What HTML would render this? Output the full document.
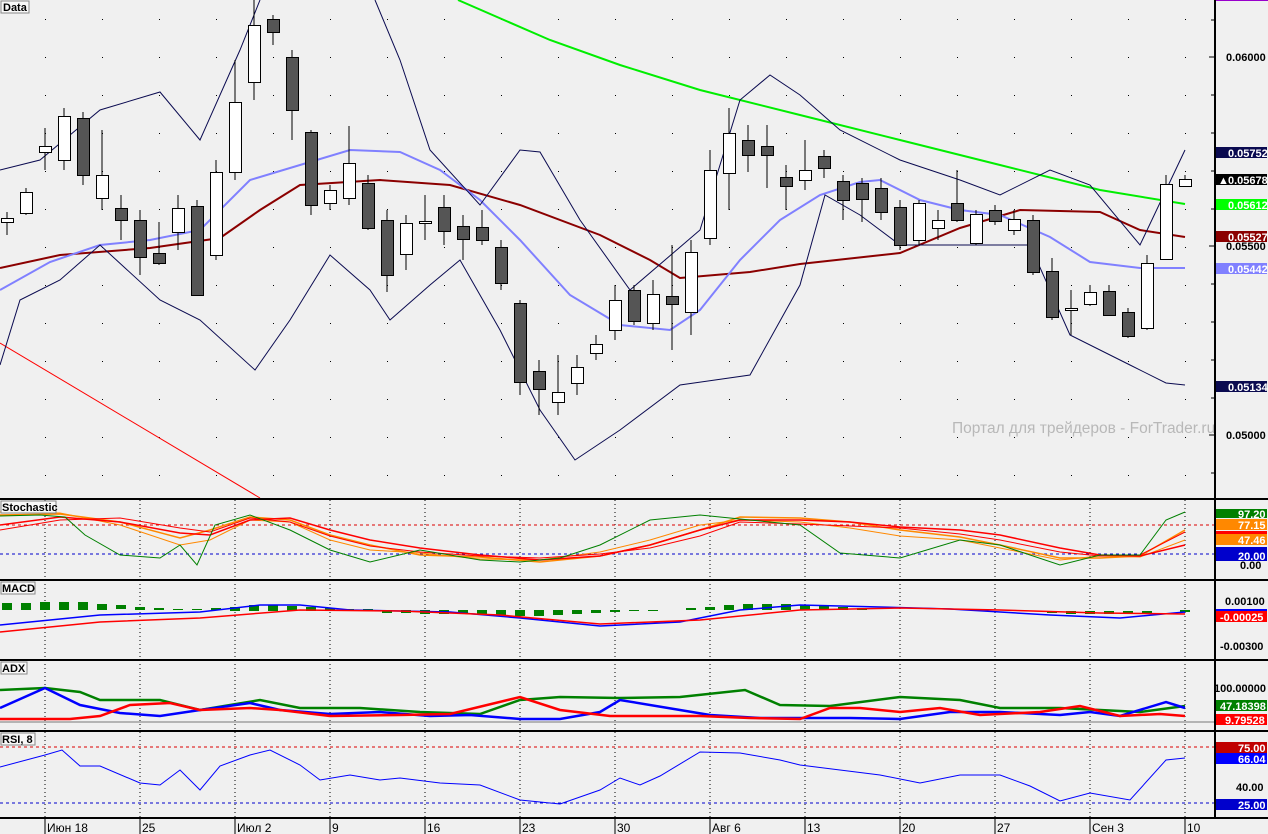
<!DOCTYPE html>
<html><head><meta charset="utf-8"><style>
html,body{margin:0;padding:0;background:#f0f0f0;}
svg{display:block;font-family:"Liberation Sans","DejaVu Sans",sans-serif;}
.t{font-weight:bold;font-size:11px;}
.ax{font-size:11px;font-weight:bold;fill:#000;}
.lb{font-size:11px;font-weight:bold;fill:#fff;}
.d{font-size:12px;fill:#000;}
</style></head><body>
<svg width="1268" height="834" viewBox="0 0 1268 834" xmlns="http://www.w3.org/2000/svg">
<rect width="1268" height="834" fill="#f0f0f0"/>
<defs>
<pattern id="dots" x="0" y="0" width="57" height="38" patternUnits="userSpaceOnUse"><rect x="45" y="19" width="1" height="1" fill="#000"/></pattern>
</defs>
<rect x="0" y="0" width="1214" height="498" fill="url(#dots)"/>
<g stroke="#000" stroke-width="1" stroke-dasharray="1,3">
<path d="M45 500V818M140 500V818M235 500V818M330 500V818M425 500V818M520 500V818M615 500V818M710 500V818M805 500V818M900 500V818M995 500V818M1090 500V818M1185 500V818"/>
</g>
<text x="952" y="433" font-size="15.5" fill="#b8b8b8">Портал для трейдеров - ForTrader.ru</text>
<line x1="0" y1="343" x2="260" y2="498" stroke="#ff0000" stroke-width="1"/>
<polyline fill="none" stroke="#00ee00" stroke-width="2" points="458,0 550,40 620,65 700,90 800,115 900,140 1000,165 1100,190 1185,204"/>
<polyline fill="none" stroke="#8b0000" stroke-width="2" points="0,268 60,255 150,248 220,238 260,210 300,185 380,180 450,185 520,205 600,235 650,260 680,278 750,272 800,264 900,253 960,228 1020,210 1100,212 1140,230 1185,237"/>
<polyline fill="none" stroke="#8080ff" stroke-width="2" points="0,290 50,262 100,245 150,240 200,230 250,180 300,165 350,150 400,152 440,170 480,200 520,240 570,295 620,325 670,330 700,310 740,260 780,220 820,195 860,182 880,180 920,200 960,210 1000,215 1050,237 1090,262 1140,268 1185,268"/>
<polyline fill="none" stroke="#0a0a50" stroke-width="1" points="0,170 40,160 100,110 160,92 200,140 240,50 260,0"/>
<polyline fill="none" stroke="#0a0a50" stroke-width="1" points="375,0 400,60 430,150 480,205 520,150 540,152 580,220 630,290 700,230 740,100 770,75 800,95 840,130 900,160 960,180 1000,195 1050,170 1090,185 1140,245 1185,150"/>
<polyline fill="none" stroke="#0a0a50" stroke-width="1" points="0,365 20,300 60,280 100,245 160,300 200,320 255,370 290,320 330,255 370,290 390,320 430,285 460,260 500,330 540,410 575,460 620,430 680,385 750,375 800,285 825,195 860,215 900,245 1030,245 1070,335 1130,365 1166,383 1185,385"/>
<g stroke="#000" stroke-width="1">
<path d="M7 212V235M26 188V215M45 128V170M64 108V170M83 112V185M102 130V210M121 195V240M140 210V275M159 222V265M178 195V250M197 200V296M216 160V260M235 60V180M254 0V100M273 15V45M292 50V140M311 130V215M330 185V210M349 126V205M368 175V230M387 210V292M406 215V270M425 195V240M444 195V245M463 215V260M482 210V245M501 240V290M520 300V395M539 360V415M558 355V415M577 355V395M596 335V360M615 285V340M634 285V325M653 280V330M672 245V350M691 240V335M710 150V245M729 108V210M748 125V172M767 125V188M786 165V210M805 140V190M824 150V178M843 175V220M862 178V222M881 178V220M900 200V250M919 200V245M938 210V240M957 170V222M976 210V245M995 205V225M1014 210V235M1033 215V275M1052 258V320M1071 290V335M1090 285V306M1109 285V316M1128 308V338M1147 255V330M1166 175V260M1185 175V186"/>
</g>
<g stroke="#000" stroke-width="1" fill="#fff">
<rect x="1.5" y="218.5" width="12" height="4"/><rect x="20.5" y="192.5" width="12" height="21"/><rect x="39.5" y="146.5" width="12" height="6"/><rect x="58.5" y="116.5" width="12" height="44"/><rect x="96.5" y="175.5" width="12" height="23"/><rect x="172.5" y="208.5" width="12" height="24"/><rect x="210.5" y="172.5" width="12" height="83"/><rect x="229.5" y="102.5" width="12" height="70"/><rect x="248.5" y="25.5" width="12" height="57"/><rect x="324.5" y="190.5" width="12" height="13"/><rect x="343.5" y="163.5" width="12" height="35"/><rect x="400.5" y="223.5" width="12" height="31"/><rect x="419.5" y="221.5" width="12" height="2"/><rect x="552.5" y="392.5" width="12" height="10"/><rect x="571.5" y="367.5" width="12" height="16"/><rect x="590.5" y="344.5" width="12" height="9"/><rect x="609.5" y="300.5" width="12" height="30"/><rect x="647.5" y="294.5" width="12" height="29"/><rect x="685.5" y="252.5" width="12" height="60"/><rect x="704.5" y="170.5" width="12" height="68"/><rect x="723.5" y="133.5" width="12" height="40"/><rect x="799.5" y="170.5" width="12" height="10"/><rect x="913.5" y="203.5" width="12" height="37"/><rect x="932.5" y="220.5" width="12" height="8"/><rect x="970.5" y="214.5" width="12" height="29"/><rect x="1008.5" y="219.5" width="12" height="11"/><rect x="1065.5" y="308.5" width="12" height="2"/><rect x="1084.5" y="292.5" width="12" height="12"/><rect x="1141.5" y="263.5" width="12" height="65"/><rect x="1160.5" y="184.5" width="12" height="75"/><rect x="1179.5" y="179.5" width="12" height="7"/>
</g>
<g stroke="#000" stroke-width="1" fill="#555">
<rect x="77.5" y="118.5" width="12" height="57"/><rect x="115.5" y="208.5" width="12" height="12"/><rect x="134.5" y="220.5" width="12" height="37"/><rect x="153.5" y="253.5" width="12" height="10"/><rect x="191.5" y="206.5" width="12" height="89"/><rect x="267.5" y="19.5" width="12" height="13"/><rect x="286.5" y="57.5" width="12" height="53"/><rect x="305.5" y="132.5" width="12" height="73"/><rect x="362.5" y="183.5" width="12" height="45"/><rect x="381.5" y="220.5" width="12" height="55"/><rect x="438.5" y="207.5" width="12" height="24"/><rect x="457.5" y="226.5" width="12" height="13"/><rect x="476.5" y="227.5" width="12" height="13"/><rect x="495.5" y="247.5" width="12" height="36"/><rect x="514.5" y="303.5" width="12" height="79"/><rect x="533.5" y="371.5" width="12" height="18"/><rect x="628.5" y="290.5" width="12" height="31"/><rect x="666.5" y="296.5" width="12" height="8"/><rect x="742.5" y="140.5" width="12" height="15"/><rect x="761.5" y="146.5" width="12" height="9"/><rect x="780.5" y="177.5" width="12" height="9"/><rect x="818.5" y="156.5" width="12" height="12"/><rect x="837.5" y="181.5" width="12" height="19"/><rect x="856.5" y="183.5" width="12" height="16"/><rect x="875.5" y="188.5" width="12" height="24"/><rect x="894.5" y="207.5" width="12" height="38"/><rect x="951.5" y="203.5" width="12" height="17"/><rect x="989.5" y="210.5" width="12" height="11"/><rect x="1027.5" y="220.5" width="12" height="52"/><rect x="1046.5" y="271.5" width="12" height="46"/><rect x="1103.5" y="291.5" width="12" height="24"/><rect x="1122.5" y="312.5" width="12" height="24"/>
</g>
<g fill="none" stroke-dasharray="3,3"><line x1="0" y1="525" x2="1214" y2="525" stroke="#d00"/><line x1="0" y1="554" x2="1214" y2="554" stroke="#00c"/></g>
<polyline fill="none" stroke="#ff8800" stroke-width="1.5" points="0,515 60,514 120,522 180,538 210,530 250,517 290,520 330,535 370,545 420,555 480,557 540,562 600,556 650,545 700,530 740,517 800,518 850,522 900,530 960,537 1000,545 1060,558 1100,558 1140,556 1185,530"/>
<polyline fill="none" stroke="#ff8800" stroke-width="1" points="0,512 60,513 120,525 180,545 210,540 250,520 290,522 330,540 370,550 420,553 480,559 540,560 600,552 650,540 700,525 740,520 800,522 850,528 900,536 960,540 1000,548 1060,560 1100,556 1140,557 1185,540"/>
<polyline fill="none" stroke="#ff0000" stroke-width="1.5" points="0,525 60,517 120,522 180,533 210,535 250,520 290,518 330,530 370,540 420,548 480,555 540,560 600,556 650,545 700,530 740,520 800,520 850,522 900,527 960,530 1000,535 1060,548 1100,555 1140,556 1185,545"/>
<polyline fill="none" stroke="#ff0000" stroke-width="1" points="0,530 60,520 120,518 180,528 210,532 250,518 290,522 330,536 370,546 420,552 480,556 540,558 600,554 650,548 700,536 740,522 800,524 850,526 900,528 960,534 1000,540 1060,552 1100,556 1140,555 1185,532"/>
<polyline fill="none" stroke="#008000" stroke-width="1" points="0,516 40,515 65,517 85,535 120,555 160,558 180,545 197,565 215,525 250,515 290,530 330,550 370,562 420,550 480,560 520,562 560,558 600,545 650,520 700,515 750,520 800,525 840,553 900,558 960,540 1000,545 1060,565 1100,555 1140,555 1166,520 1185,512"/>
<g fill="#008000">
<rect x="2" y="603" width="10" height="7"/><rect x="21" y="603" width="10" height="7"/><rect x="40" y="602" width="10" height="8"/><rect x="59" y="602" width="10" height="8"/><rect x="78" y="602" width="10" height="8"/><rect x="97" y="604" width="10" height="6"/><rect x="116" y="605" width="10" height="4"/><rect x="135" y="607" width="10" height="3"/><rect x="154" y="608" width="10" height="2"/><rect x="173" y="609" width="10" height="1"/><rect x="192" y="609" width="10" height="1"/><rect x="211" y="608" width="10" height="2"/><rect x="230" y="607" width="10" height="4"/><rect x="249" y="605" width="10" height="6"/><rect x="268" y="605" width="10" height="6"/><rect x="287" y="606" width="10" height="5"/><rect x="306" y="607" width="10" height="4"/><rect x="325" y="608" width="10" height="3"/><rect x="344" y="609" width="10" height="2"/><rect x="363" y="609" width="10" height="2"/><rect x="382" y="610" width="10" height="3"/><rect x="401" y="610" width="10" height="3"/><rect x="420" y="610" width="10" height="4"/><rect x="439" y="610" width="10" height="4"/><rect x="458" y="610" width="10" height="4"/><rect x="477" y="610" width="10" height="4"/><rect x="496" y="610" width="10" height="5"/><rect x="515" y="610" width="10" height="6"/><rect x="534" y="610" width="10" height="6"/><rect x="553" y="610" width="10" height="5"/><rect x="572" y="610" width="10" height="4"/><rect x="591" y="610" width="10" height="3"/><rect x="610" y="610" width="10" height="2"/><rect x="629" y="610" width="10" height="1"/><rect x="648" y="610" width="10" height="1"/><rect x="686" y="608" width="10" height="2"/><rect x="705" y="607" width="10" height="3"/><rect x="724" y="605" width="10" height="5"/><rect x="743" y="604" width="10" height="6"/><rect x="762" y="604" width="10" height="6"/><rect x="781" y="604" width="10" height="6"/><rect x="800" y="605" width="10" height="5"/><rect x="819" y="606" width="10" height="4"/><rect x="838" y="607" width="10" height="3"/><rect x="857" y="608" width="10" height="2"/><rect x="1047" y="611" width="10" height="2"/><rect x="1066" y="611" width="10" height="3"/><rect x="1085" y="611" width="10" height="3"/><rect x="1104" y="611" width="10" height="3"/><rect x="1123" y="611" width="10" height="3"/><rect x="1142" y="611" width="10" height="2"/><rect x="1180" y="610" width="10" height="2"/>
</g>
<polyline fill="none" stroke="#0000ff" stroke-width="1.5" points="0,625 100,615 200,612 260,605 300,605 350,610 450,612 520,618 600,626 680,622 740,610 800,605 880,607 950,609 1050,615 1120,618 1185,612"/>
<polyline fill="none" stroke="#ff0000" stroke-width="1.5" points="0,632 100,622 200,618 300,610 400,611 500,615 600,624 700,620 800,610 900,608 1000,610 1100,613 1185,614"/>
<line x1="0" y1="722" x2="1214" y2="722" stroke="#777"/>
<polyline fill="none" stroke="#008000" stroke-width="2.5" points="0,690 45,688 80,692 100,700 160,700 200,710 260,700 300,708 360,708 420,712 480,714 520,700 560,697 620,698 680,697 745,690 780,705 830,706 900,697 960,700 1000,708 1060,708 1100,710 1140,712 1185,706"/>
<polyline fill="none" stroke="#0000ff" stroke-width="2.5" points="0,708 45,688 80,705 120,713 160,716 200,710 250,703 280,710 330,714 380,712 430,716 470,715 520,719 560,719 600,712 620,700 680,710 710,715 760,718 800,718 850,718 900,719 950,712 1000,712 1060,715 1090,712 1120,716 1166,702 1185,708"/>
<polyline fill="none" stroke="#ff0000" stroke-width="2.5" points="0,719 70,719 100,716 130,705 170,703 200,710 250,708 280,710 330,716 400,715 450,714 520,697 560,710 610,716 660,716 700,716 750,718 800,719 830,708 860,708 900,712 940,708 980,715 1040,712 1080,706 1120,716 1160,714 1185,716"/>
<g fill="none" stroke-dasharray="3,3"><line x1="0" y1="747" x2="1214" y2="747" stroke="#d00"/><line x1="0" y1="803" x2="1214" y2="803" stroke="#00c"/></g>
<polyline fill="none" stroke="#0000ff" stroke-width="1" points="0,767 45,755 62,750 80,766 100,766 140,783 160,785 180,770 200,790 220,766 250,755 270,750 300,765 320,780 350,775 380,780 400,778 440,783 480,785 520,800 560,804 600,790 620,778 640,785 660,776 700,752 740,753 780,760 800,765 840,770 880,775 920,783 960,775 1000,775 1030,786 1060,801 1090,793 1130,800 1166,760 1185,758"/>
<g stroke="#000" stroke-width="2">
<line x1="0" y1="499" x2="1268" y2="499"/><line x1="0" y1="580" x2="1268" y2="580"/><line x1="0" y1="660" x2="1268" y2="660"/><line x1="0" y1="731" x2="1268" y2="731"/><line x1="0" y1="818" x2="1268" y2="818"/>
<line x1="1215" y1="0" x2="1215" y2="819"/>
</g>
<line x1="1216" y1="0" x2="1268" y2="0" stroke="#9900cc" stroke-width="2"/>
<g>
<rect x="1" y="1" width="28" height="12" fill="#f8f8f8" stroke="#888"/><text x="3" y="11" class="t">Data</text>
<rect x="1" y="501" width="55" height="12" fill="#f8f8f8" stroke="#888"/><text x="2" y="511" class="t">Stochastic</text>
<rect x="1" y="582" width="34" height="12" fill="#f8f8f8" stroke="#888"/><text x="2" y="592" class="t">MACD</text>
<rect x="1" y="662" width="26" height="12" fill="#f8f8f8" stroke="#888"/><text x="2" y="672" class="t">ADX</text>
<rect x="1" y="733" width="34" height="12" fill="#f8f8f8" stroke="#888"/><text x="2" y="743" class="t">RSI, 8</text>
</g>
<g stroke="#000"><path d="M1209 57H1216M1209 246H1216M1209 435H1216M1211 20H1216M1211 95H1216M1211 133H1216M1211 171H1216M1211 209H1216M1211 284H1216M1211 322H1216M1211 360H1216M1211 398H1216M1211 473H1216"/></g>
<text x="1226" y="61" class="ax">0.06000</text>
<rect x="1216" y="147" width="51" height="11" fill="#0a0a50"/><text x="1228" y="157" class="lb">0.05752</text>
<rect x="1216" y="174" width="51" height="11" fill="#000"/><text x="1218" y="184" class="lb" font-size="8">▲</text><text x="1228" y="184" class="lb">0.05678</text>
<rect x="1216" y="199" width="51" height="11" fill="#00ff00"/><text x="1228" y="209" class="lb">0.05612</text>
<rect x="1216" y="231" width="51" height="11" fill="#8b0000"/><text x="1228" y="241" class="lb">0.05527</text>
<text x="1226" y="250" class="ax">0.05500</text>
<rect x="1216" y="263" width="51" height="11" fill="#8080ff"/><text x="1228" y="273" class="lb">0.05442</text>
<rect x="1216" y="381" width="51" height="11" fill="#0a0a50"/><text x="1228" y="391" class="lb">0.05134</text>
<text x="1226" y="439" class="ax">0.05000</text>
<rect x="1216" y="509" width="51" height="9" fill="#008000"/><text x="1238" y="518" class="lb">97.20</text>
<rect x="1216" y="519" width="51" height="11" fill="#ff8800"/><text x="1238" y="529" class="lb">77.15</text>
<rect x="1216" y="531" width="51" height="3" fill="#ff0000"/>
<rect x="1216" y="534" width="51" height="11" fill="#ff8800"/><text x="1238" y="544" class="lb">47.46</text>
<rect x="1216" y="547" width="51" height="3" fill="#0000cc"/>
<rect x="1216" y="550" width="51" height="11" fill="#0000cc"/><text x="1238" y="560" class="lb">20.00</text>
<text x="1240" y="569" class="ax">0.00</text>
<text x="1225" y="605" class="ax">0.00100</text>
<rect x="1216" y="609" width="51" height="2" fill="#0000ff"/>
<rect x="1216" y="611" width="51" height="11" fill="#ff0000"/><text x="1220" y="621" class="lb">-0.00025</text>
<text x="1220" y="650" class="ax">-0.00300</text>
<text x="1214" y="692" class="ax">100.00000</text>
<rect x="1216" y="700" width="51" height="11" fill="#008000"/><text x="1220" y="710" class="lb">47.18398</text>
<rect x="1216" y="714" width="51" height="11" fill="#ff0000"/><text x="1225" y="724" class="lb">9.79528</text>
<rect x="1216" y="742" width="51" height="11" fill="#c00000"/><text x="1238" y="752" class="lb">75.00</text>
<rect x="1216" y="753" width="51" height="11" fill="#0000ff"/><text x="1238" y="763" class="lb">66.04</text>
<text x="1236" y="791" class="ax">40.00</text>
<rect x="1216" y="799" width="51" height="11" fill="#0000cc"/><text x="1238" y="809" class="lb">25.00</text>
<g stroke="#000"><path d="M45 819V834M140 819V834M235 819V834M330 819V834M425 819V834M520 819V834M615 819V834M710 819V834M805 819V834M900 819V834M995 819V834M1090 819V834M1185 819V834"/></g>
<g>
<text x="47" y="832" class="d">Июн 18</text><text x="142" y="832" class="d">25</text><text x="237" y="832" class="d">Июл 2</text><text x="332" y="832" class="d">9</text><text x="427" y="832" class="d">16</text><text x="522" y="832" class="d">23</text><text x="617" y="832" class="d">30</text><text x="712" y="832" class="d">Авг 6</text><text x="807" y="832" class="d">13</text><text x="902" y="832" class="d">20</text><text x="997" y="832" class="d">27</text><text x="1092" y="832" class="d">Сен 3</text><text x="1187" y="832" class="d">10</text>
</g>
</svg>
</body></html>
